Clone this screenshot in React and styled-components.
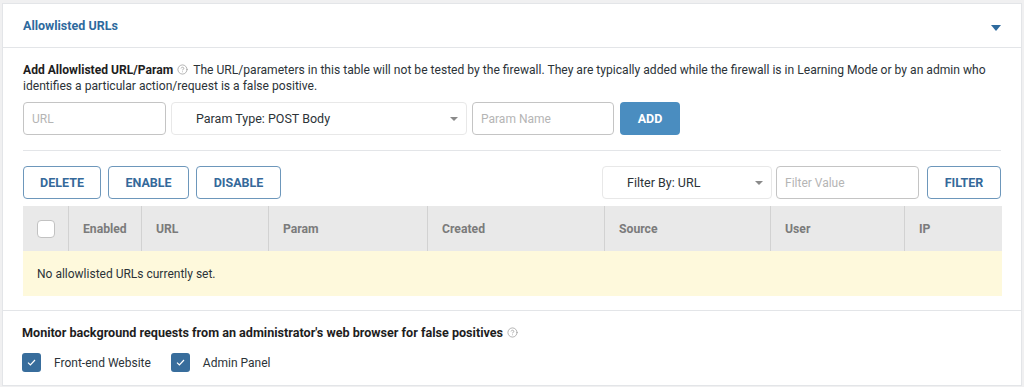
import React from 'react';
import styled, { createGlobalStyle } from 'styled-components';
import { CircleHelp } from 'lucide-react';

const GlobalStyle = createGlobalStyle`
  body {
    margin: 0;
    background: #f0f0f1;
    font-family: Roboto, "Liberation Sans", Arial, sans-serif;
    font-size: 12px;
    color: #2c3338;
  }
`;

const Card = styled.div`
  margin: 3px 2px 0 2px;
  width: 1020px;
  box-sizing: border-box;
  background: #fff;
  border: 1px solid #e3e5e8;
`;

const Header = styled.div`
  height: 43px;
  padding: 0 20px;
  display: flex;
  align-items: center;
  justify-content: space-between;
  border-bottom: 1px solid #e3e5e8;
`;

const Title = styled.h3`
  margin: 0;
  font-size: 12.5px;
  font-weight: 700;
  color: #2e6a9e;
`;

const Caret = styled.span`
  width: 0;
  height: 0;
  margin-top: 4px;
  border-left: 5px solid transparent;
  border-right: 5px solid transparent;
  border-top: 6px solid #2e6a9e;
`;

const Section = styled.div`
  padding: ${(p) => p.pad || '14px 20px'};
  border-bottom: ${(p) => (p.last ? 'none' : '1px solid #e3e5e8')};
`;

const Description = styled.p`
  margin: 0 0 8px 0;
  line-height: 16px;
  font-size: 12.1px;
  color: #2c3338;
`;

const Strong = styled.strong`
  font-weight: 700;
  color: #1e1e1e;
`;

const Help = styled(CircleHelp)`
  display: inline-block;
  vertical-align: -1px;
  margin: 0 5px 0 4px;
  color: #9a9a9a;
`;

const Row = styled.div`
  display: flex;
  align-items: center;
  gap: ${(p) => p.gap || '5px'};
`;

const TextInput = styled.input`
  box-sizing: border-box;
  width: ${(p) => p.w}px;
  height: 33px;
  border: 1px solid #c4c4c4;
  border-radius: 4px;
  padding: 0 8px;
  font-family: inherit;
  font-size: 12px;
  color: #2c3338;
  background: #fff;
  &::placeholder {
    color: #b5b5b5;
  }
`;

const Select = styled.div`
  box-sizing: border-box;
  width: ${(p) => p.w}px;
  height: 33px;
  border: 1px solid #e8e8e8;
  border-radius: 4px;
  padding: 0 8px 0 24px;
  display: flex;
  align-items: center;
  justify-content: space-between;
  font-size: 12.5px;
  color: #2c3338;
  background: #fff;
`;

const SelectArrow = styled.span`
  width: 0;
  height: 0;
  border-left: 4px solid transparent;
  border-right: 4px solid transparent;
  border-top: 4px solid #8a8a8a;
`;

const SolidButton = styled.button`
  box-sizing: border-box;
  height: 33px;
  width: ${(p) => p.w}px;
  margin-left: ${(p) => p.ml || 0}px;
  border: none;
  border-radius: 4px;
  background: #4a8dc0;
  color: #fff;
  font-family: inherit;
  font-size: 12.5px;
  font-weight: 700;
`;

const OutlineButton = styled.button`
  box-sizing: border-box;
  height: 33px;
  width: ${(p) => p.w}px;
  margin-left: ${(p) => p.ml || 0}px;
  border: 1px solid #6d97bb;
  border-radius: 4px;
  background: #fff;
  color: #35699a;
  font-family: inherit;
  font-size: 12.5px;
  font-weight: 700;
`;

const Divider = styled.hr`
  margin: 15px 0;
  border: none;
  border-top: 1px solid #e3e5e8;
`;

const Toolbar = styled.div`
  display: flex;
  justify-content: space-between;
  align-items: center;
  margin-bottom: 7px;
`;

const Table = styled.div`
  display: grid;
  grid-template-columns: 45px 73px 127px 159px 177px 166px 134px 98px;
`;

const HeadCell = styled.div`
  height: 45px;
  background: #e9e9e9;
  display: flex;
  align-items: center;
  justify-content: ${(p) => (p.center ? 'center' : 'flex-start')};
  padding-left: ${(p) => (p.center ? 0 : 14)}px;
  border-left: ${(p) => (p.first ? 'none' : '1px solid #d2d2d2')};
  font-weight: 700;
  font-size: 12.2px;
  color: #7b7b7b;
`;

const Box = styled.span`
  box-sizing: border-box;
  width: 18px;
  height: 18px;
  border: 1px solid #c2c2c2;
  border-radius: 4px;
  background: #fff;
`;

const EmptyRow = styled.div`
  grid-column: 1 / -1;
  height: 45px;
  background: #fef9dc;
  display: flex;
  align-items: center;
  padding-left: 14px;
  color: #2c3338;
`;

const MonitorTitle = styled.div`
  font-weight: 700;
  font-size: 12.6px;
  color: #1e1e1e;
  margin: 0 0 13px 0;
`;

const CheckLabel = styled.label`
  display: flex;
  align-items: center;
  gap: 13px;
  margin-right: 20px;
  color: #2c3338;
`;

const Checked = styled.span`
  width: 19px;
  height: 19px;
  border-radius: 3px;
  background: #386d9c;
  display: flex;
  align-items: center;
  justify-content: center;
`;

const Tick = () => (
  <svg width="9" height="7" viewBox="0 0 9 7">
    <path d="M1 3.6 L3.4 6 L8 1" fill="none" stroke="#fff" strokeWidth="1.2" />
  </svg>
);

const columns = ['Enabled', 'URL', 'Param', 'Created', 'Source', 'User', 'IP'];

export default function App() {
  return (
    <>
      <GlobalStyle />
      <Card>
        <Header>
          <Title>Allowlisted URLs</Title>
          <Caret />
        </Header>
        <Section pad="14px 20px 14px 20px">
          <Description>
            <Strong>Add Allowlisted URL/Param</Strong>
            <Help size={11} strokeWidth={1.6} />
            The URL/parameters in this table will not be tested by the firewall. They are typically added while the firewall is in Learning Mode or by an admin who identifies a particular action/request is a false positive.
          </Description>
          <Row gap="5px">
            <TextInput w={143} placeholder="URL" />
            <Select w={296}>
              <span>Param Type: POST Body</span>
              <SelectArrow />
            </Select>
            <TextInput w={142} placeholder="Param Name" />
            <SolidButton w={60} ml={1}>ADD</SolidButton>
          </Row>
          <Divider />
          <Toolbar>
            <Row gap="7px">
              <OutlineButton w={78}>DELETE</OutlineButton>
              <OutlineButton w={81}>ENABLE</OutlineButton>
              <OutlineButton w={85}>DISABLE</OutlineButton>
            </Row>
            <Row gap="4px">
              <Select w={170}>
                <span>Filter By: URL</span>
                <SelectArrow />
              </Select>
              <TextInput w={143} placeholder="Filter Value" />
              <OutlineButton w={74} ml={4}>FILTER</OutlineButton>
            </Row>
          </Toolbar>
          <Table>
            <HeadCell first center>
              <Box />
            </HeadCell>
            {columns.map((c) => (
              <HeadCell key={c}>{c}</HeadCell>
            ))}
            <EmptyRow>No allowlisted URLs currently set.</EmptyRow>
          </Table>
        </Section>
        <Section pad="14px 20px 13px 19px" last>
          <MonitorTitle>
            Monitor background requests from an administrator's web browser for false positives
            <Help size={11} strokeWidth={1.6} />
          </MonitorTitle>
          <Row gap="0">
            <CheckLabel>
              <Checked><Tick /></Checked>
              Front-end Website
            </CheckLabel>
            <CheckLabel>
              <Checked><Tick /></Checked>
              Admin Panel
            </CheckLabel>
          </Row>
        </Section>
      </Card>
    </>
  );
}
